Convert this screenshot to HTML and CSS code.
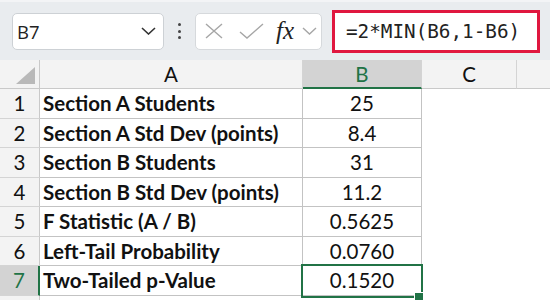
FILE: index.html
```html
<!DOCTYPE html>
<html lang="en">
<head>
    <meta charset="UTF-8">
    <title>F Test</title>
    <link rel="stylesheet" href="styles.css">
</head>
<body>
    <div class="toolbar">
        <div class="name-box">
            <span class="name-text">B7</span>
            <svg class="chevron" width="15" height="8" viewBox="0 0 15 8"><path d="M1 1 L7.5 7 L14 1" fill="none" stroke="#333" stroke-width="1.6"/></svg>
        </div>
        <div class="dots"><span></span><span></span><span></span></div>
        <div class="fx-box">
            <svg width="18" height="16" viewBox="0 0 18 16"><path d="M1 1 L17 15 M17 1 L1 15" fill="none" stroke="#a6a6a6" stroke-width="1.4"/></svg>
            <svg width="25" height="16" viewBox="0 0 25 16"><path d="M1 9 L8 15 L24 1" fill="none" stroke="#a6a6a6" stroke-width="1.4"/></svg>
            <span class="fx">fx</span>
            <svg width="15" height="8" viewBox="0 0 15 8"><path d="M1 1 L7.5 7 L14 1" fill="none" stroke="#a6a6a6" stroke-width="1.4"/></svg>
        </div>
        <div class="formula">=2*MIN(B6,1-B6)</div>
    </div>

    <div class="sheet">
        <div class="corner"><span class="tri"></span></div>
        <div class="col-head">A</div>
        <div class="col-head active">B</div>
        <div class="col-head">C</div>
        <div class="col-head last"></div>

        <div class="row-head">1</div>
        <div class="cell label">Section A Students</div>
        <div class="cell num">25</div>
        <div class="blank"></div><div class="blank"></div>

        <div class="row-head">2</div>
        <div class="cell label">Section A Std Dev (points)</div>
        <div class="cell num">8.4</div>
        <div class="blank"></div><div class="blank"></div>

        <div class="row-head">3</div>
        <div class="cell label">Section B Students</div>
        <div class="cell num">31</div>
        <div class="blank"></div><div class="blank"></div>

        <div class="row-head">4</div>
        <div class="cell label">Section B Std Dev (points)</div>
        <div class="cell num">11.2</div>
        <div class="blank"></div><div class="blank"></div>

        <div class="row-head">5</div>
        <div class="cell label">F Statistic (A / B)</div>
        <div class="cell num">0.5625</div>
        <div class="blank"></div><div class="blank"></div>

        <div class="row-head">6</div>
        <div class="cell label">Left-Tail Probability</div>
        <div class="cell num">0.0760</div>
        <div class="blank"></div><div class="blank"></div>

        <div class="row-head active">7</div>
        <div class="cell label">Two-Tailed p-Value</div>
        <div class="cell num selected">0.1520<span class="handle"></span></div>
        <div class="blank"></div><div class="blank"></div>

        <div class="row-head"></div>
        <div class="blank"></div><div class="blank"></div><div class="blank"></div><div class="blank"></div>
    </div>
</body>
</html>
```

FILE: styles.css
```css
body {
    margin: 0;
    width: 550px;
    height: 300px;
    overflow: hidden;
    background: #fff;
    font-family: Lato, "Open Sans", sans-serif;
}

.toolbar {
    height: 60px;
    box-sizing: border-box;
    background: #e9ecef;
    border-top: 2px solid #f3f4f6;
    display: flex;
    align-items: center;
    padding-left: 12px;
}

.name-box {
    width: 152px;
    height: 37px;
    box-sizing: border-box;
    background: #fff;
    border: 1px solid #cdd1d5;
    border-radius: 5px;
    display: flex;
    align-items: center;
    justify-content: space-between;
    padding: 0 7px 0 4px;
}

.name-text {
    font-family: "Open Sans", sans-serif;
    font-size: 18.5px;
    color: #222;
}

.dots {
    width: 31px;
    display: flex;
    flex-direction: column;
    align-items: center;
    gap: 3.5px;
}

.dots span {
    width: 3px;
    height: 3px;
    border-radius: 50%;
    background: #444;
}

.fx-box {
    width: 127px;
    height: 37px;
    box-sizing: border-box;
    background: #fff;
    border: 1px solid #d6d9dc;
    border-radius: 5px;
    display: flex;
    align-items: center;
    padding-left: 9px;
    gap: 16px;
}

.fx-box .fx {
    font-family: "Liberation Serif", serif;
    font-style: italic;
    font-size: 25px;
    color: #222;
    margin-left: -4px;
    margin-right: -8px;
}

.formula {
    margin-left: 10px;
    margin-top: 1px;
    width: 208px;
    height: 43px;
    box-sizing: border-box;
    background: #fff;
    border: 3px solid #e0173f;
    font-family: "DejaVu Sans Mono", monospace;
    font-size: 19.3px;
    color: #222;
    display: flex;
    align-items: center;
    padding-left: 11px;
}

.sheet {
    display: grid;
    grid-template-columns: 40px 263px 119px 95px 1fr;
    grid-template-rows: 29px repeat(8, 29.5px);
    height: 240px;
    overflow: hidden;
    font-size: 20.5px;
    color: #111;
}

.corner {
    background: #f3f3f3;
    border-right: 1px solid #c9c9c9;
    border-bottom: 1px solid #c9c9c9;
    position: relative;
}

.tri {
    position: absolute;
    right: 4px;
    bottom: 4px;
    width: 0;
    height: 0;
    border-left: 19px solid transparent;
    border-bottom: 17px solid #b9b9b9;
}

.col-head {
    background: #f3f3f3;
    border-right: 1px solid #d4d4d4;
    border-bottom: 1px solid #c9c9c9;
    display: flex;
    align-items: center;
    justify-content: center;
}

.col-head.active {
    background: #d3d3d3;
    color: #217346;
    border-bottom: 2px solid #217346;
}

.col-head.last {
    border-right: none;
}

.row-head {
    background: #f3f3f3;
    border-right: 1px solid #c9c9c9;
    border-bottom: 1px solid #d4d4d4;
    display: flex;
    align-items: center;
    justify-content: center;
}

.row-head.active {
    background: #d3d3d3;
    color: #217346;
    border-right: 2px solid #217346;
}

.cell {
    border-right: 1px solid #c3c3c3;
    border-bottom: 1px solid #c3c3c3;
    display: flex;
    align-items: center;
    white-space: nowrap;
    overflow: hidden;
}

.label {
    font-weight: bold;
    padding-left: 3px;
}

.num {
    justify-content: center;
}

.selected {
    position: relative;
    overflow: visible;
}

.selected::after {
    content: "";
    position: absolute;
    left: -2px;
    top: -2px;
    right: -2px;
    bottom: -3px;
    border: 2.5px solid #217346;
}

.handle {
    position: absolute;
    right: -3px;
    bottom: -7px;
    width: 8px;
    height: 8px;
    background: #217346;
    border: 1px solid #fff;
    z-index: 2;
}
```
